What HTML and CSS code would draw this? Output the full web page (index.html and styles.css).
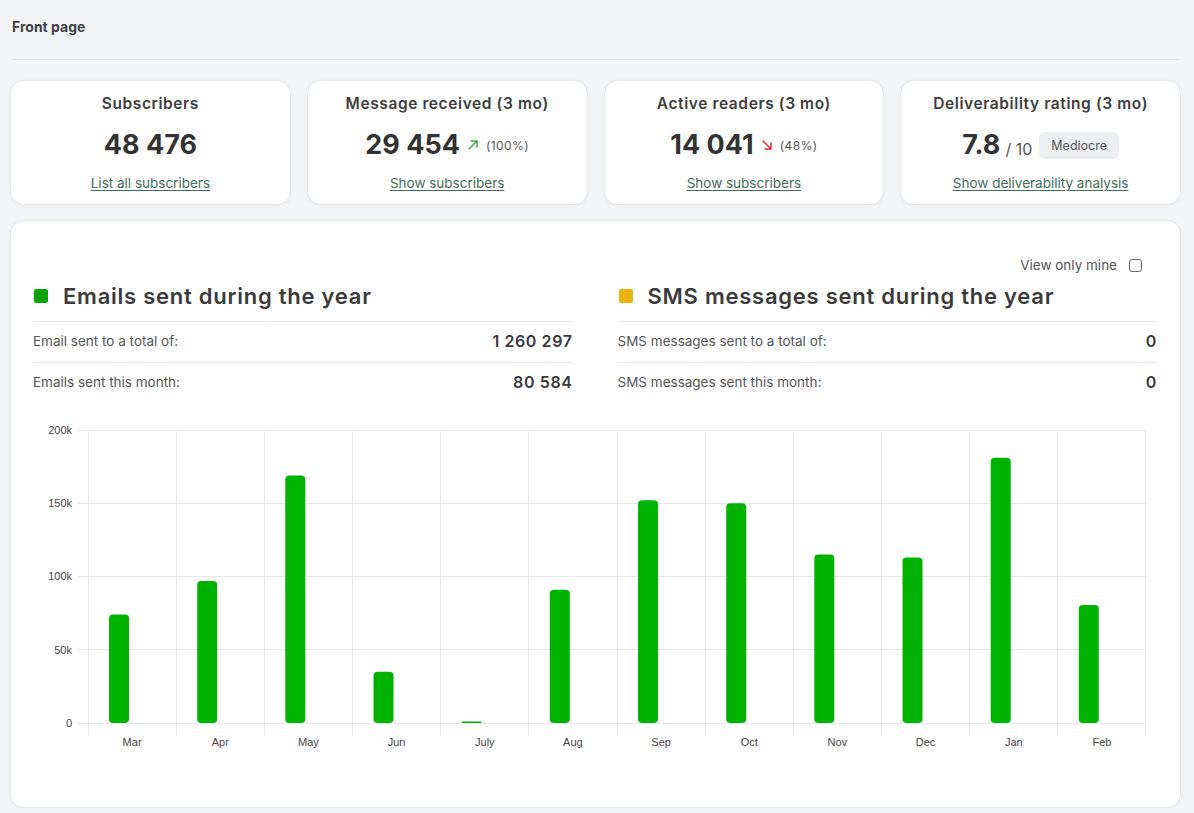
FILE: index.html
```html
<!DOCTYPE html>
<html lang="en">
<head>
<meta charset="utf-8">
<title>Front page</title>
<link rel="stylesheet" href="styles.css">
</head>
<body>
<div class="page">
  <header class="topbar"><h1>Front page</h1></header>

  <section class="cards">
    <div class="card">
      <div class="card-title">Subscribers</div>
      <div class="card-value"><span class="big">48 476</span></div>
      <a class="card-link" href="#">List all subscribers</a>
    </div>
    <div class="card">
      <div class="card-title">Message received (3 mo)</div>
      <div class="card-value">
        <span class="big">29 454</span>
        <svg class="trend up" viewBox="0 0 12 12" width="12" height="12"><path d="M2 10 L10 2 M4 2 H10 V8" fill="none" stroke="currentColor" stroke-width="1.5" stroke-linecap="round" stroke-linejoin="round"/></svg>
        <span class="pct">(100%)</span>
      </div>
      <a class="card-link" href="#">Show subscribers</a>
    </div>
    <div class="card">
      <div class="card-title">Active readers (3 mo)</div>
      <div class="card-value">
        <span class="big">14 041</span>
        <svg class="trend down" viewBox="0 0 12 12" width="12" height="12"><path d="M2 2 L10 10 M4 10 H10 V4" fill="none" stroke="currentColor" stroke-width="1.5" stroke-linecap="round" stroke-linejoin="round"/></svg>
        <span class="pct">(48%)</span>
      </div>
      <a class="card-link" href="#">Show subscribers</a>
    </div>
    <div class="card">
      <div class="card-title">Deliverability rating (3 mo)</div>
      <div class="card-value">
        <span class="big">7.8</span><span class="outof">/ 10</span>
        <span class="badge">Mediocre</span>
      </div>
      <a class="card-link" href="#">Show deliverability analysis</a>
    </div>
  </section>

  <section class="panel">
    <div class="panel-opts">
      <label class="opt">View only mine <span class="checkbox"></span></label>
    </div>
    <div class="stats">
      <div class="stat-col">
        <h2 class="stat-head"><span class="sq green"></span>Emails sent during the year</h2>
        <div class="stat-row"><span>Email sent to a total of:</span><b>1 260 297</b></div>
        <div class="stat-row"><span>Emails sent this month:</span><b>80 584</b></div>
      </div>
      <div class="stat-col">
        <h2 class="stat-head"><span class="sq amber"></span>SMS messages sent during the year</h2>
        <div class="stat-row"><span>SMS messages sent to a total of:</span><b>0</b></div>
        <div class="stat-row"><span>SMS messages sent this month:</span><b>0</b></div>
      </div>
    </div>

    <svg class="chart" viewBox="0 0 1124 380" width="1124" height="380">
      <g class="grid" stroke="#e4e8ec" stroke-width="1">
        <line x1="45" y1="15.5" x2="1113" y2="15.5"/>
        <line x1="45" y1="88.5" x2="1113" y2="88.5"/>
        <line x1="45" y1="161.5" x2="1113" y2="161.5"/>
        <line x1="45" y1="234.5" x2="1113" y2="234.5"/>
        <line x1="45" y1="308.5" x2="1113" y2="308.5"/>
        <line x1="55.5" y1="15" x2="55.5" y2="320"/>
        <line x1="143.5" y1="15" x2="143.5" y2="320"/>
        <line x1="231.5" y1="15" x2="231.5" y2="320"/>
        <line x1="319.5" y1="15" x2="319.5" y2="320"/>
        <line x1="407.5" y1="15" x2="407.5" y2="320"/>
        <line x1="495.5" y1="15" x2="495.5" y2="320"/>
        <line x1="584.5" y1="15" x2="584.5" y2="320"/>
        <line x1="672.5" y1="15" x2="672.5" y2="320"/>
        <line x1="760.5" y1="15" x2="760.5" y2="320"/>
        <line x1="848.5" y1="15" x2="848.5" y2="320"/>
        <line x1="936.5" y1="15" x2="936.5" y2="320"/>
        <line x1="1024.5" y1="15" x2="1024.5" y2="320"/>
        <line x1="1112.5" y1="15" x2="1112.5" y2="320"/>
      </g>
      <g class="ylabels" text-anchor="end">
        <text x="39" y="19">200k</text>
        <text x="39" y="92">150k</text>
        <text x="39" y="165">100k</text>
        <text x="39" y="239">50k</text>
        <text x="39" y="312">0</text>
      </g>
      <g class="bars" fill="#00b300">
        <rect x="76" y="199.6" width="20" height="108.4" rx="4"/>
        <rect x="164.2" y="165.9" width="20" height="142.1" rx="4"/>
        <rect x="252.3" y="60.4" width="20" height="247.6" rx="4"/>
        <rect x="340.5" y="256.7" width="20" height="51.3" rx="4"/>
        <rect x="428.7" y="306.5" width="20" height="1.5" rx="0.75"/>
        <rect x="516.8" y="174.7" width="20" height="133.3" rx="4"/>
        <rect x="605" y="85.3" width="20" height="222.7" rx="4"/>
        <rect x="693.2" y="88.3" width="20" height="219.7" rx="4"/>
        <rect x="781.3" y="139.5" width="20" height="168.5" rx="4"/>
        <rect x="869.5" y="142.5" width="20" height="165.5" rx="4"/>
        <rect x="957.7" y="42.8" width="20" height="265.2" rx="4"/>
        <rect x="1045.8" y="189.9" width="20" height="118.1" rx="4"/>
      </g>
      <g class="xlabels" text-anchor="middle">
        <text x="99.1" y="331">Mar</text>
        <text x="187.3" y="331">Apr</text>
        <text x="275.4" y="331">May</text>
        <text x="363.6" y="331">Jun</text>
        <text x="451.8" y="331">July</text>
        <text x="539.9" y="331">Aug</text>
        <text x="628.1" y="331">Sep</text>
        <text x="716.3" y="331">Oct</text>
        <text x="804.4" y="331">Nov</text>
        <text x="892.6" y="331">Dec</text>
        <text x="980.8" y="331">Jan</text>
        <text x="1068.9" y="331">Feb</text>
      </g>
    </svg>
  </section>
</div>
</body>
</html>
```

FILE: styles.css
```css
* { box-sizing: border-box; }

html, body {
  margin: 0;
  padding: 0;
  background: #f4f5f7;
  font-family: "Inter", "Liberation Sans", sans-serif;
  color: #3a3a3a;
}

.page {
  padding: 0 13px 0 10px;
}

.topbar {
  margin: 0 2px;
  height: 60px;
  border-bottom: 1px solid #e4e6ea;
  display: flex;
  align-items: flex-start;
}

.topbar h1 {
  margin: 18px 0 0 0;
  font-size: 14px;
  line-height: 18px;
  font-weight: 700;
  color: #3f3f46;
}

.cards {
  margin-top: 20px;
  display: grid;
  grid-template-columns: repeat(4, 1fr);
  gap: 16px;
}

.card {
  background: #fff;
  border: 1px solid #e6e8eb;
  border-radius: 14px;
  box-shadow: 0 1px 4px rgba(0, 0, 0, 0.05);
  padding: 12px 10px 12px;
  display: flex;
  flex-direction: column;
  align-items: center;
  height: 125px;
}

.card-title {
  font-size: 15.5px;
  line-height: 22px;
  font-weight: 600;
  color: #3d3d3d;
  letter-spacing: 0.6px;
}

.card-value {
  margin-top: 12px;
  height: 36px;
  display: flex;
  align-items: center;
  gap: 7px;
}

.big {
  font-size: 27px;
  line-height: 36px;
  font-weight: 700;
  color: #333;
}

.trend { display: block; }
.trend.up { color: #3cb04a; }
.trend.down { color: #e0303a; }

.pct {
  font-size: 12px;
  color: #555;
  letter-spacing: 0.4px;
}

.outof {
  font-size: 16px;
  color: #555;
  margin-left: -2px;
  align-self: flex-end;
  line-height: 28px;
}

.badge {
  margin-left: 0;
  background: #eeeff1;
  border-radius: 6px;
  font-size: 12.5px;
  color: #555;
  line-height: 27px;
  padding: 0 12px;
}

.card-link {
  margin-top: 11px;
  font-size: 13.5px;
  line-height: 18px;
  color: #3d6e5b;
  text-decoration: underline;
  text-underline-offset: 2px;
  text-decoration-thickness: 1px;
}

.panel {
  margin-top: 15px;
  background: #fff;
  border: 1px solid #e6e8eb;
  border-radius: 14px;
  box-shadow: 0 1px 4px rgba(0, 0, 0, 0.05);
  padding: 35px 23px 12px 22px;
}

.panel-opts {
  display: flex;
  justify-content: flex-end;
  padding-right: 15px;
}

.opt {
  display: flex;
  align-items: center;
  gap: 12px;
  font-size: 13.5px;
  line-height: 18px;
  color: #555;
}

.checkbox {
  width: 13px;
  height: 13px;
  border: 1.5px solid #6b6b6b;
  border-radius: 3px;
  background: #fff;
}

.stats {
  margin-top: 6px;
  display: grid;
  grid-template-columns: 1fr 1fr;
  gap: 45px;
}

.stat-head {
  margin: 0;
  height: 42px;
  padding-bottom: 10px;
  border-bottom: 1px solid #e6e8eb;
  display: flex;
  align-items: center;
  gap: 15px;
  font-size: 22px;
  font-weight: 600;
  color: #3b3b3b;
  letter-spacing: 0.75px;
}

.sq {
  width: 14px;
  height: 14px;
  border-radius: 2px;
  margin-left: 1px;
}
.sq.green { background: #0da20d; }
.sq.amber { background: #ebb10c; }

.stat-row {
  display: flex;
  justify-content: space-between;
  align-items: center;
  height: 40px;
  padding-bottom: 2px;
  font-size: 13.5px;
  color: #555;
}

.stat-row + .stat-row { border-top: 1px solid #e6e8eb; height: 41px; }

.stat-row b {
  font-size: 16px;
  font-weight: 600;
  color: #3a3a3a;
  letter-spacing: 0.6px;
}

.chart {
  display: block;
  margin-top: 12px;
}

.chart text {
  font-family: "Liberation Sans", Arial, sans-serif;
  font-size: 11px;
  fill: #444;
}
```
